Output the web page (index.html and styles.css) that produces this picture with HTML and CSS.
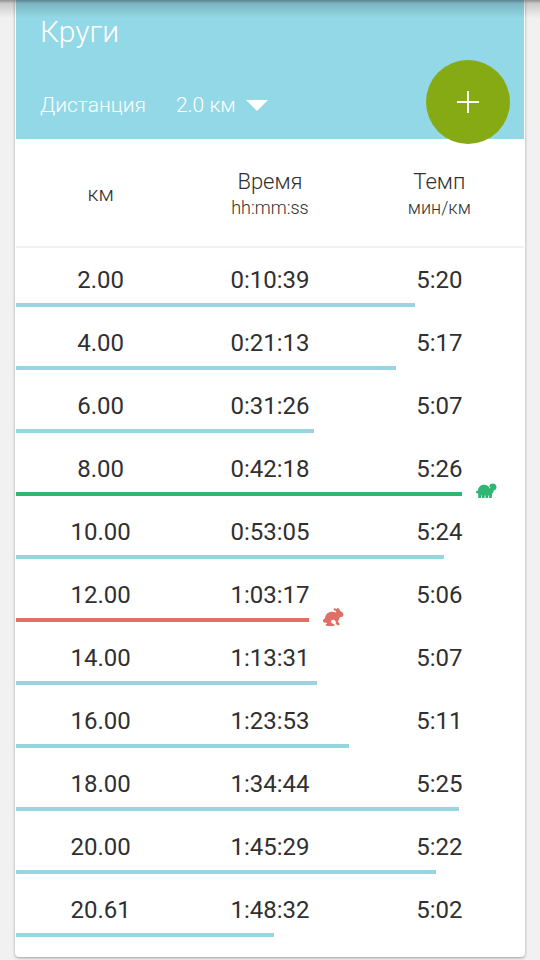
FILE: index.html
```html
<!DOCTYPE html>
<html lang="ru">
<head>
<meta charset="utf-8">
<meta name="viewport" content="width=device-width, initial-scale=1">
<title>Круги</title>
<link rel="stylesheet" href="styles.css">
</head>
<body>
<main class="card">
  <header class="card-header">
    <h1 class="title">Круги</h1>
    <div class="filter">
      <label class="filter-label" for="distance">Дистанция</label>
      <span class="picker">
        <select class="picker-select" id="distance">
          <option>2.0 км</option>
        </select>
        <svg class="picker-arrow" viewBox="0 0 22 11" aria-hidden="true"><path d="M0 0h22L11 11z"/></svg>
      </span>
    </div>
    <button class="add" type="button" aria-label="Добавить">
      <svg class="add-icon" viewBox="0 0 22 22" aria-hidden="true"><path d="M10 0h2v10h10v2H12v10h-2V12H0v-2h10z"/></svg>
    </button>
  </header>
  <table class="laps">
    <thead>
      <tr>
        <th scope="col"><span class="distance">км</span></th>
        <th scope="col"><span class="name">Время</span><span class="unit">hh:mm:ss</span></th>
        <th scope="col"><span class="name">Темп</span><span class="unit">мин/км</span></th>
      </tr>
    </thead>
    <tbody>
      <tr class="lap"><td>2.00</td><td>0:10:39</td><td>5:20</td></tr>
      <tr class="track"><td colspan="3"><div class="bar" style="width:78.5%"></div></td></tr>
      <tr class="lap"><td>4.00</td><td>0:21:13</td><td>5:17</td></tr>
      <tr class="track"><td colspan="3"><div class="bar" style="width:74.8%"></div></td></tr>
      <tr class="lap"><td>6.00</td><td>0:31:26</td><td>5:07</td></tr>
      <tr class="track"><td colspan="3"><div class="bar" style="width:58.7%"></div></td></tr>
      <tr class="lap"><td>8.00</td><td>0:42:18</td><td>5:26</td></tr>
      <tr class="track"><td colspan="3"><div class="bar slowest" style="width:87.8%">
        <svg class="marker" viewBox="0 0 22 20" aria-hidden="true"><path d="M0 10.600L1.900 9.400C2.500 5.800 5 3.800 8 3.800C11 3.800 12.900 5.300 13.800 7.600L14.600 6.800L13.300 5.600C13.300 3.800 14.600 2.600 16.600 2.600C19 2.600 20.500 4 20.500 6C20.500 7.900 19.500 8.900 17.900 9.300C17.600 11.200 16.900 12.300 15.900 13V17H13.100V14.400H12.200V17H9.500V14.400H8.600V17H5.900V14.400H5V17H2.200V12.400L0 11.900Z"/></svg>
      </div></td></tr>
      <tr class="lap"><td>10.00</td><td>0:53:05</td><td>5:24</td></tr>
      <tr class="track"><td colspan="3"><div class="bar" style="width:84.3%"></div></td></tr>
      <tr class="lap"><td>12.00</td><td>1:03:17</td><td>5:06</td></tr>
      <tr class="track"><td colspan="3"><div class="bar fastest" style="width:57.7%">
        <svg class="marker" viewBox="0 0 22 20" aria-hidden="true"><path d="M0 14.500C-.2 13 .6 11.800 2 11.500C2.300 7 5.500 4.600 9.300 4.700C10.700 4.700 11.900 5 12.900 5.500L13.300 4.600L10.900 3C10.100 1.700 10.900 1.100 12.300 1.400L14.400 2.200L13.900 1.300C14.400.6 15.500.9 16.200 1.900L17.500 4.300C19.300 4.700 20.600 6.300 20.400 8C20.200 9.600 18.500 10.300 16.700 10.200C16.500 11.800 15.800 13.200 14.800 14.200L16.400 16.600C16.800 17.700 16.200 18.400 15 18.400L12.800 16.900C13.300 14.500 11.900 12.700 10 12.800C8.200 12.900 7.400 14.600 8.500 15.900L11 17.200L11.700 18.300C11.500 18.900 11 19 10.500 19H4.300C3 19 2.400 18.100 2.900 17.200L4.300 16.500L2.600 15.500C1.500 15.900 .3 15.400 0 14.500Z"/></svg>
      </div></td></tr>
      <tr class="lap"><td>14.00</td><td>1:13:31</td><td>5:07</td></tr>
      <tr class="track"><td colspan="3"><div class="bar" style="width:59.3%"></div></td></tr>
      <tr class="lap"><td>16.00</td><td>1:23:53</td><td>5:11</td></tr>
      <tr class="track"><td colspan="3"><div class="bar" style="width:65.6%"></div></td></tr>
      <tr class="lap"><td>18.00</td><td>1:34:44</td><td>5:25</td></tr>
      <tr class="track"><td colspan="3"><div class="bar" style="width:87.2%"></div></td></tr>
      <tr class="lap"><td>20.00</td><td>1:45:29</td><td>5:22</td></tr>
      <tr class="track"><td colspan="3"><div class="bar" style="width:82.7%"></div></td></tr>
      <tr class="lap"><td>20.61</td><td>1:48:32</td><td>5:02</td></tr>
      <tr class="track"><td colspan="3"><div class="bar" style="width:50.8%"></div></td></tr>
    </tbody>
  </table>
</main>
</body>
</html>
```
FILE: styles.css
```css
* {
  box-sizing: border-box;
}

body {
  margin: 0;
  padding: 0 15px 3px;
  background: #f1f1f1;
  color: #303030;
  font-family: Roboto, "Noto Sans", sans-serif;
}

/* Shadow cast by the app bar above the scrolled content */
body::before {
  content: "";
  position: absolute;
  top: 0;
  left: 0;
  right: 0;
  height: 18px;
  background: linear-gradient(rgba(0, 0, 0, 0.4), rgba(0, 0, 0, 0.16) 20%, rgba(0, 0, 0, 0));
  z-index: 2;
  pointer-events: none;
}

.card {
  padding: 0 1px 16px;
  background: #fff;
  border-radius: 0 0 4px 4px;
  box-shadow: 0 1px 3px rgba(0, 0, 0, 0.35);
}

.card-header {
  position: relative;
  padding: 14px 24px 18px;
  background: #93d8e6;
  color: #fff;
}

.title {
  margin: 0 0 39px;
  font-size: 30px;
  line-height: 36px;
  font-weight: 300;
}

.filter {
  display: flex;
  align-items: center;
  gap: 30px;
  font-size: 21px;
  line-height: 32px;
  font-weight: 300;
}

.picker {
  display: flex;
  align-items: center;
  position: relative;
}

.picker-select {
  appearance: none;
  margin: 0;
  padding: 0 32px 0 0;
  border: 0;
  background: none;
  color: inherit;
  font: inherit;
}

.picker-arrow {
  position: absolute;
  right: 0;
  width: 22px;
  height: 11px;
  fill: #fff;
  pointer-events: none;
}

.add {
  position: absolute;
  right: 14px;
  bottom: -5px;
  display: grid;
  place-items: center;
  width: 84px;
  height: 84px;
  padding: 0;
  border: 0;
  border-radius: 50%;
  background: #86aa13;
}

.add-icon {
  width: 22px;
  height: 22px;
  fill: #fff;
}

.laps {
  width: 100%;
  table-layout: fixed;
  border-collapse: separate;
  border-spacing: 0;
  text-align: center;
}

.laps th {
  height: 109px;
  padding: 2px 0 0;
  border-bottom: 2px solid #f1f1f1;
  font-weight: 300;
}

.name,
.unit,
.distance {
  display: block;
}

.name {
  font-size: 22px;
  line-height: 28px;
}

.unit {
  font-size: 18px;
  line-height: 24px;
}

.distance {
  font-size: 21px;
  line-height: 24px;
}

.lap td {
  height: 55px;
  padding: 8px 0 0;
  font-size: 24px;
  line-height: 32px;
}

.track td {
  height: 8px;
  padding: 0 0 4px;
}

.bar {
  position: relative;
  height: 4px;
  background: #98d5e1;
}

.slowest {
  background: #2fb574;
  color: #2fb574;
}

.fastest {
  background: #e07065;
  color: #e07065;
}

.marker {
  position: absolute;
  left: calc(100% + 14px);
  bottom: -5px;
  width: 22px;
  height: 20px;
  fill: currentColor;
}
```
